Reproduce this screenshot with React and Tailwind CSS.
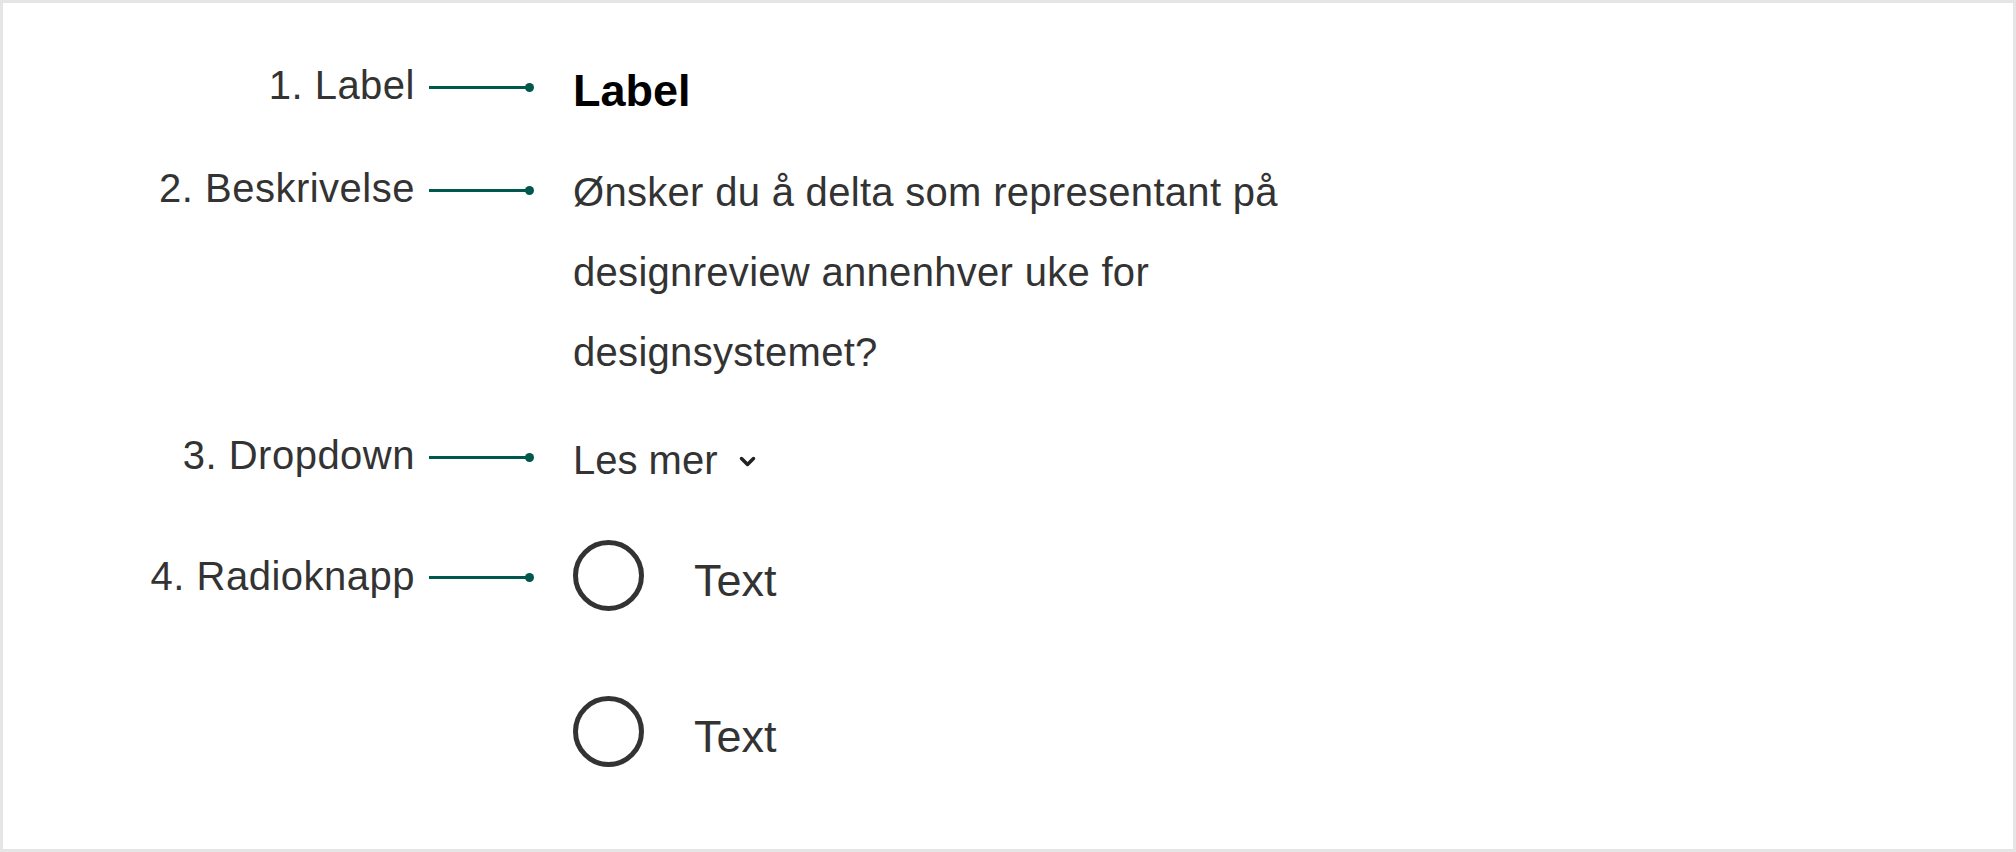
import React from "react";

const font = { fontFamily: '"Liberation Sans", Arial, sans-serif' };

function Connector({ top }) {
  return (
    <div className={`ml-[14px] flex h-[9px] w-[105px] items-center ${top}`}>
      <div className="h-[3px] flex-1 bg-[#00584c]" />
      <div className="-ml-[2px] h-[9px] w-[9px] rounded-full bg-[#00584c]" />
    </div>
  );
}

function Row({ label, labelTop = "mt-0", lineTop, className = "", children }) {
  return (
    <div className={`flex items-start ${className}`}>
      <div className={`w-[412px] text-right text-[40px] leading-[48px] tracking-[0.5px] text-[#333] ${labelTop}`}>
        {label}
      </div>
      <Connector top={lineTop} />
      <div className="ml-[39px]">{children}</div>
    </div>
  );
}

function Radio({ text }) {
  return (
    <label className="flex items-start gap-[50px]">
      <span className="h-[71px] w-[71px] rounded-full border-[5px] border-[#333] bg-white" />
      <span className="mt-[17px] text-[45px] leading-[48px] text-[#333]">{text}</span>
    </label>
  );
}

export default function App() {
  return (
    <div
      className="box-border h-[852px] w-[2016px] border-[3px] border-[#e5e5e5] bg-white pt-[58px]"
      style={font}
    >
      <Row label="1. Label" lineTop="mt-[22px]">
        <div className="mt-[6px] text-[45px] font-bold leading-[48px] text-black">Label</div>
      </Row>

      <Row label="2. Beskrivelse" labelTop="mt-[12px]" lineTop="mt-[34px]" className="mt-[37px]">
        <p className="w-[750px] text-[40px] leading-[80px] tracking-[0.3px] text-[#333]">
          Ønsker du å delta som representant på designreview annenhver uke for designsystemet?
        </p>
      </Row>

      <Row label="3. Dropdown" lineTop="mt-[22px]" className="mt-[39px]">
        <button className="mt-[5px] flex items-center gap-[21px] text-[40px] leading-[48px] text-[#333]">
          <span>Les mer</span>
          <svg width="17" height="11" viewBox="0 0 17 11" className="mt-[2px]">
            <polyline
              points="2.5,2.5 8.5,8.5 14.5,2.5"
              fill="none"
              stroke="#222"
              strokeWidth="3.5"
              strokeLinecap="round"
              strokeLinejoin="round"
            />
          </svg>
        </button>
      </Row>

      <Row label="4. Radioknapp" labelTop="mt-[12px]" lineTop="mt-[33px]" className="mt-[56px]">
        <div className="flex flex-col gap-[85px]">
          <Radio text="Text" />
          <Radio text="Text" />
        </div>
      </Row>
    </div>
  );
}
